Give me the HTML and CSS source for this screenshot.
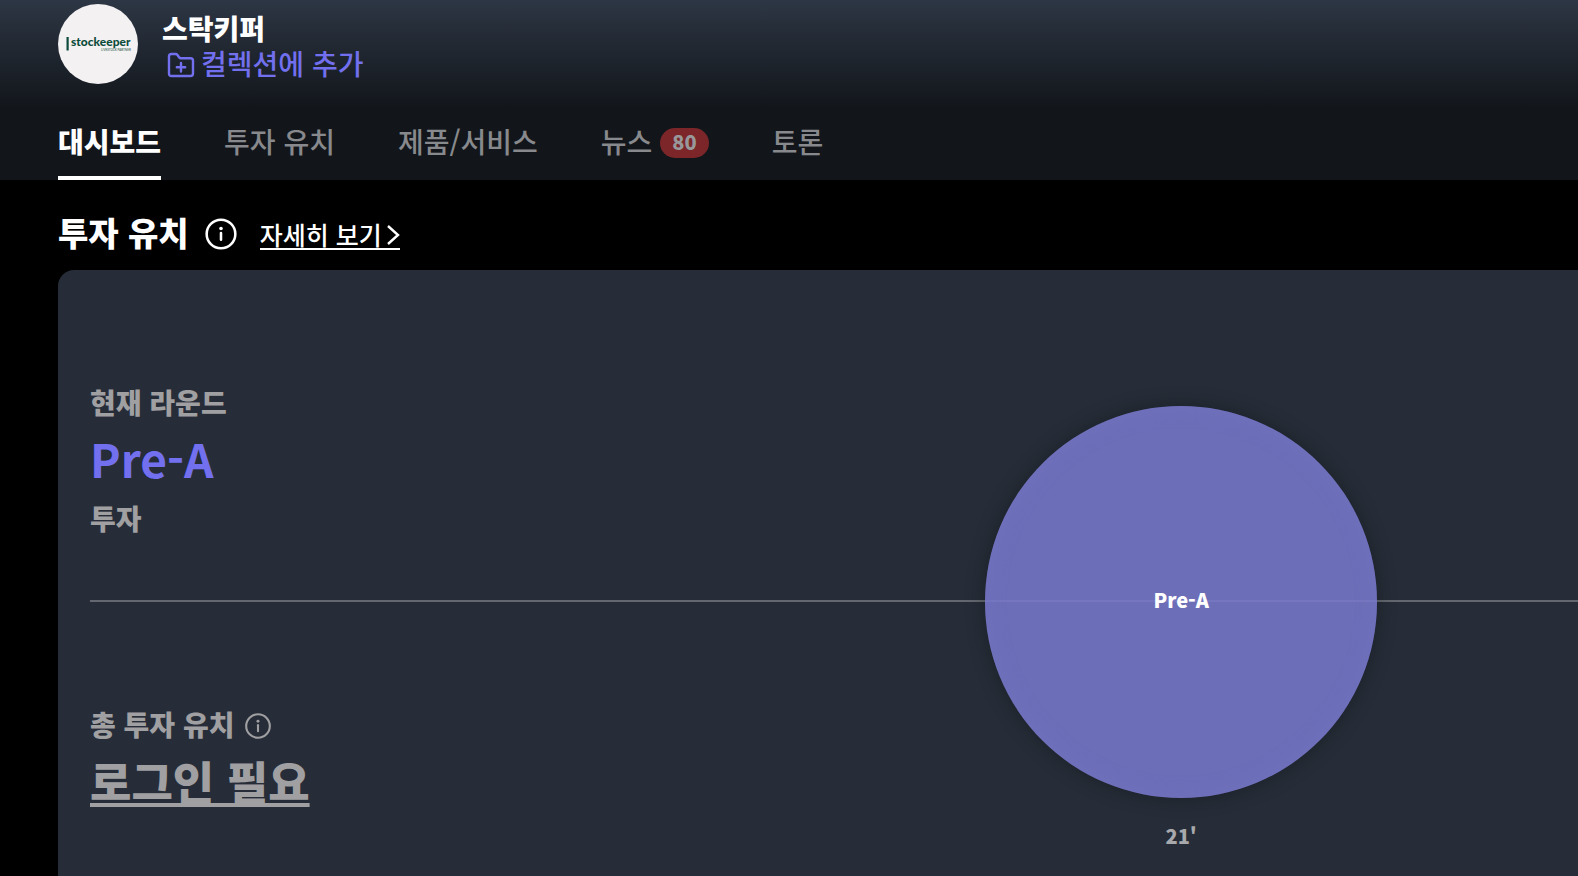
FILE: index.html
```html
<!DOCTYPE html>
<html lang="ko">
<head>
<meta charset="utf-8">
<meta name="viewport" content="width=device-width, initial-scale=1">
<title>스탁키퍼</title>
<link rel="stylesheet" href="styles.css">
</head>
<body>
<header class="header">
  <div class="company">
    <svg class="logo" viewBox="0 0 80 80" role="img" aria-label="stockeeper">
      <circle cx="40" cy="40" r="40" fill="#f3f1f2"/>
      <rect x="8.500" y="33" width="2.200" height="13.500" fill="#0d4b3a"/>
      <text class="logo-name" x="13" y="42">stockeeper</text>
      <text class="logo-tag" x="43" y="46.500">LIVESTOCK PARTNER</text>
    </svg>
    <div class="company-info">
      <h1 class="company-name">스탁키퍼</h1>
      <button class="add-button" type="button">
        <svg class="folder-icon" viewBox="0 0 28 26" stroke-width="2.4" aria-hidden="true">
          <path d="M2 20.500V4.500Q2 2 4.500 2H8.500Q9.700 2 10.500 3L12 5.200Q12.700 6.200 14 6.200H23.500Q26 6.200 26 8.700V21.500Q26 24 23.500 24H4.500Q2 24 2 21.500ZM14 11V19.500M9.800 15.200H18.200"/>
        </svg>
        <span>컬렉션에 추가</span>
      </button>
    </div>
  </div>
  <nav class="tabs">
    <a class="tab tab-active" href="#dashboard">대시보드</a>
    <a class="tab" href="#funding">투자 유치</a>
    <a class="tab" href="#products">제품/서비스</a>
    <a class="tab" href="#news">뉴스<span class="badge">80</span></a>
    <a class="tab" href="#talk">토론</a>
  </nav>
</header>
<main class="main">
  <div class="section-head">
    <h2 class="section-title">투자 유치</h2>
    <svg class="info-icon info-large" viewBox="0 0 32 32" stroke-width="2.4" role="img" aria-label="정보">
      <circle cx="16" cy="16" r="13.500"/><path d="M16 15V21.500"/><circle class="dot" cx="16" cy="10.800" r="1.700"/>
    </svg>
    <a class="more-link" href="#funding">자세히 보기<svg class="chevron" viewBox="0 0 14 22" stroke-width="2.4" aria-hidden="true"><path d="M2 2L12 11L2 20"/></svg></a>
  </div>
  <section class="card">
    <div class="stat stat-round">
      <p class="label">현재 라운드</p>
      <p class="value">Pre-A</p>
      <p class="label">투자</p>
    </div>
    <hr class="timeline">
    <div class="stat stat-total">
      <p class="label">총 투자 유치
        <svg class="info-icon info-small" viewBox="0 0 32 32" stroke-width="2.4" role="img" aria-label="정보">
          <circle cx="16" cy="16" r="13.500"/><path d="M16 15V22"/><circle class="dot" cx="16" cy="10.500" r="1.700"/>
        </svg>
      </p>
      <a class="login" href="#login">로그인 필요</a>
    </div>
    <figure class="round">
      <div class="bubble">Pre-A</div>
      <figcaption class="year">21'</figcaption>
    </figure>
  </section>
</main>
</body>
</html>
```
FILE: styles.css
```css
* { box-sizing: border-box; }

body {
  margin: 0;
  min-height: 100vh;
  display: flex;
  flex-direction: column;
  background: #000;
  color: #fff;
  font-family: "Noto Sans CJK KR", sans-serif;
  font-size: 28px;
  font-weight: 500;
  line-height: 36px;
}

h1, h2, p, figure { margin: 0; }
a { color: inherit; text-decoration: none; }

.header {
  padding: 4px 58px 0;
  background: linear-gradient(#2d3644, #12161b 108px);
}

.company { display: flex; gap: 24px; }
.logo { width: 80px; height: 80px; flex: none; }
.logo-name { font: 900 12px Lato, sans-serif; fill: #0d4b3a; }
.logo-tag { font: 3px Lato, sans-serif; fill: #0d4b3a; }
.company-info { padding-top: 6px; }
.company-name { font-size: 28px; line-height: 36px; font-weight: 900; }

.add-button {
  display: flex;
  align-items: center;
  gap: 6px;
  padding: 0 0 0 5px;
  border: 0;
  background: none;
  color: #7270ee;
  font: inherit;
  line-height: 34px;
}
.folder-icon {
  width: 28px;
  height: 26px;
  margin-top: 4px;
  fill: none;
  stroke: currentColor;
  stroke-linecap: round;
  stroke-linejoin: round;
}

.tabs { display: flex; gap: 63px; margin-top: 24px; }
.tab {
  display: flex;
  align-items: center;
  gap: 8px;
  height: 72px;
  padding-bottom: 2px;
  border-bottom: 4px solid transparent;
  color: #88898c;
}
.tab-active { border-color: #fff; color: #fff; font-weight: 900; }
.badge {
  margin-top: 4px;
  padding: 0 12px 2px;
  border-radius: 15px;
  background: #7c2629;
  color: #98989b;
  font-size: 20px;
  font-weight: 900;
  line-height: 28px;
}

.main {
  flex: 1;
  display: flex;
  flex-direction: column;
  padding-left: 58px;
}
.section-head { display: flex; align-items: center; height: 90px; padding-top: 14px; }
.section-title { font-size: 33px; line-height: 48px; font-weight: 900; }

.info-icon { fill: none; stroke: currentColor; stroke-linecap: round; }
.info-icon .dot { fill: currentColor; stroke: none; }
.info-large { width: 34px; height: 34px; margin: 4px 22px 0 15px; }
.info-small { width: 28px; height: 28px; margin-top: 4px; }

.more-link {
  display: flex;
  align-items: center;
  gap: 4px;
  margin-top: 6px;
  border-bottom: 2px solid;
  font-size: 25px;
  line-height: 28px;
}
.chevron { width: 14px; height: 22px; margin-top: 2px; fill: none; stroke: currentColor; }

.card {
  flex: 1;
  display: grid;
  grid-template-columns: 7fr 8fr;
  grid-template-rows: auto auto 1fr;
  padding-left: 32px;
  border-radius: 16px 0 0 0;
  background: #262d38;
}
.stat { grid-column: 1; color: #a09fa1; }
.stat-round { grid-row: 1; padding: 114px 0 64px; }
.stat-total { grid-row: 3; padding-top: 104px; }
.label { display: flex; align-items: center; gap: 10px; font-weight: 900; }
.value { padding-bottom: 4px; color: #7270ee; font-size: 46px; line-height: 76px; font-weight: 700; }
.login {
  font-size: 45px;
  line-height: 78px;
  font-weight: 900;
  text-decoration: underline;
  text-decoration-skip-ink: none;
}
.timeline {
  grid-column: 1 / 3;
  grid-row: 2;
  width: 100%;
  height: 2px;
  margin: 0;
  border: 0;
  background: #636870;
}

.round {
  grid-column: 2;
  grid-row: 1 / 4;
  display: flex;
  flex-direction: column;
  align-items: center;
  gap: 24px;
  padding-top: 136px;
  font-size: 20px;
  line-height: 28px;
  font-weight: 900;
}
.bubble {
  display: flex;
  align-items: center;
  justify-content: center;
  width: 392px;
  height: 392px;
  padding-bottom: 4px;
  border-radius: 50%;
  background: rgba(119, 119, 201, 0.88);
  box-shadow: 0 0 20px rgba(0, 0, 0, 0.3), inset 0 0 20px rgba(119, 119, 201, 0.4);
}
.year { color: #a8a9ad; }
```
